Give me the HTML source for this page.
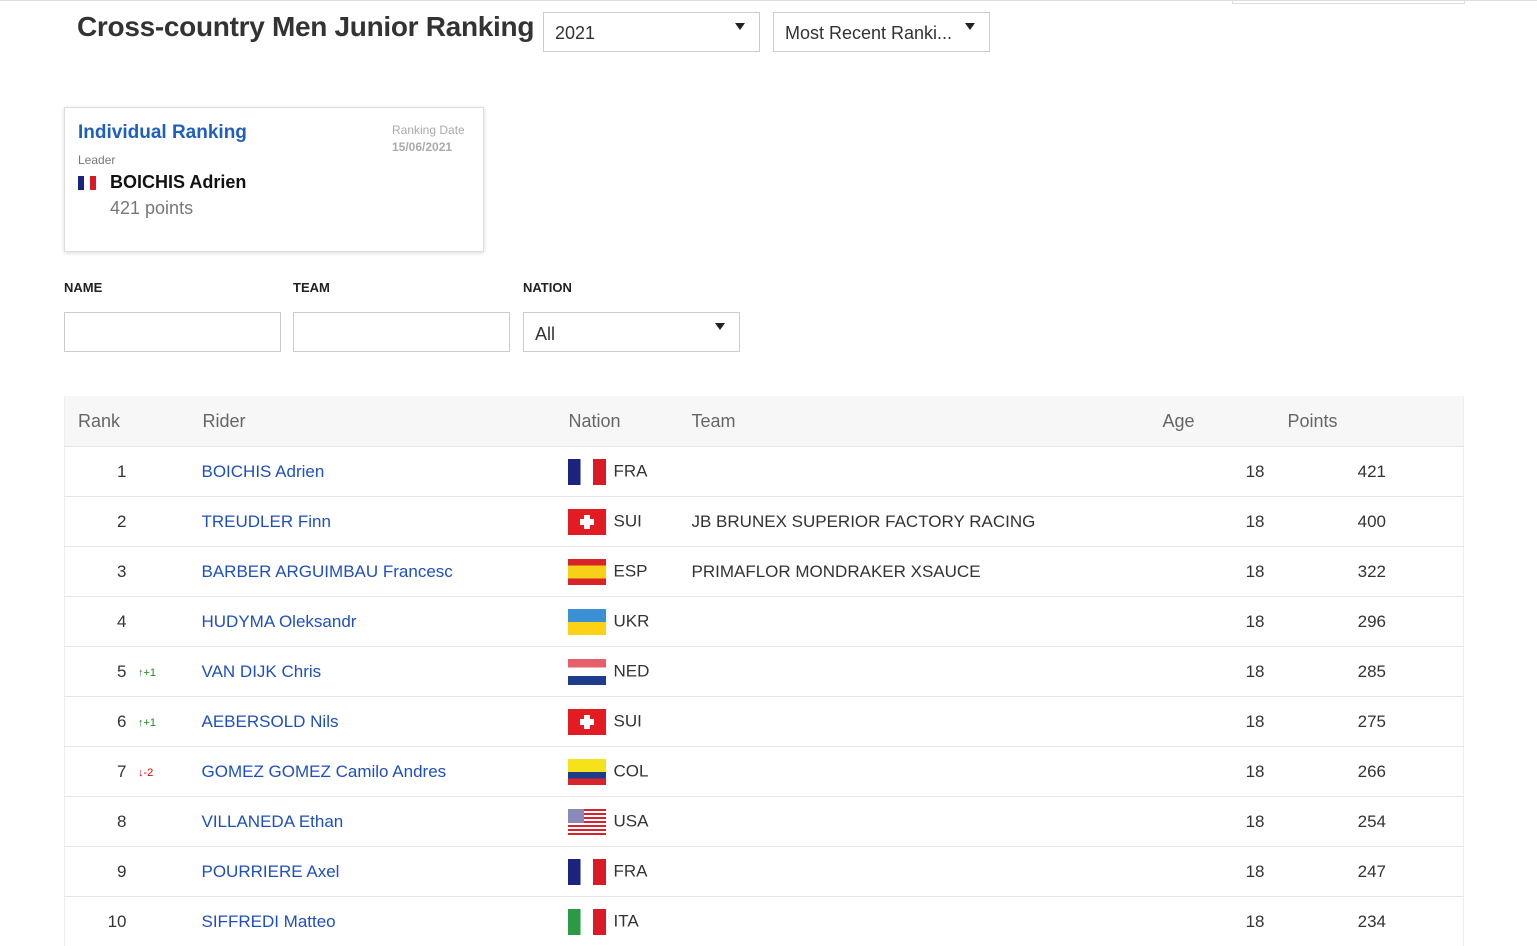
<!DOCTYPE html>
<html><head><meta charset="utf-8"><style>
body{margin:0;width:1537px;height:942px;overflow:hidden;background:#fff;font-family:"Liberation Sans",sans-serif;color:#333;position:relative}
.a{position:absolute}
.sel{position:absolute;border:1px solid #ccc;height:38px;box-sizing:border-box;font-size:18px;color:#333;padding:10px 11px 8px}
.sel:after{content:"";position:absolute;right:14px;top:10px;border:5px solid transparent;border-top:7px solid #222}
.inp{position:absolute;border:1px solid #ccc;height:40px;width:217px;box-sizing:border-box;top:312px}
.lbl{position:absolute;top:280px;font-size:13px;font-weight:bold;color:#222}
table{position:absolute;left:64px;top:396px;width:1400px;border-collapse:collapse;table-layout:fixed;font-size:17px;border-left:1px solid #eee;border-right:1px solid #eee}
td,th{height:50px;padding:2px 0 0;box-sizing:border-box;border-top:1px solid #e6e6e6;font-weight:normal;white-space:nowrap;overflow:visible}
th{background:#f7f7f7;color:#666;text-align:left;border:none;font-size:18px}
.r{text-align:right;padding-right:62px;position:relative}
.n{color:#1f4fbf;padding-left:13px}
.f{display:inline-block;width:38px;height:26px;vertical-align:middle;margin-right:8px;position:relative}
.m{position:absolute;left:73px;top:20px;font-size:11px}
.ag{text-align:right;padding-right:11px}
.pt{text-align:right;padding-right:77px}
</style></head><body>
<div class="a" style="left:0;top:0;width:1537px;border-top:1px solid #ddd"></div>
<div class="a" style="left:1232px;top:0;width:231px;height:3px;border:1px solid #ddd;border-top:none"></div>
<div class="a" style="left:77px;top:11px;font-size:28px;font-weight:bold;color:#333;letter-spacing:-0.3px">Cross-country Men Junior Ranking</div>
<div class="sel" style="left:543px;top:12px;width:217px;height:40px">2021</div>
<div class="sel" style="left:773px;top:12px;width:217px;height:40px">Most Recent Ranki...</div>
<div class="a" style="left:64px;top:107px;width:420px;height:145px;box-sizing:border-box;border:1px solid #ddd;box-shadow:0 1px 4px rgba(0,0,0,.15)">
<div class="a" style="left:13px;top:14px;font-size:19px;font-weight:bold;color:#1f5fbf">Individual Ranking</div>
<div class="a" style="left:327px;top:14px;font-size:12px;color:#aaa;line-height:17px">Ranking Date<br><b>15/06/2021</b></div>
<div class="a" style="left:13px;top:45px;font-size:12px;color:#777">Leader</div>
<div class="a" style="left:13px;top:68px;width:18px;height:14px;background:linear-gradient(90deg,#1a237e 33%,#fff 33% 66%,#d81b26 66%)"></div>
<div class="a" style="left:45px;top:64px;font-size:18px;font-weight:bold;color:#111">BOICHIS Adrien</div>
<div class="a" style="left:45px;top:90px;font-size:18px;color:#777">421 points</div>
</div>
<div class="lbl" style="left:64px">NAME</div><div class="lbl" style="left:293px">TEAM</div><div class="lbl" style="left:523px">NATION</div>
<div class="inp" style="left:64px"></div><div class="inp" style="left:293px"></div>
<div class="sel" style="left:523px;top:312px;width:217px;height:40px;padding-top:11px">All</div>
<table>
<colgroup><col style="width:124px"><col style="width:379px"><col style="width:124px"><col style="width:459px"><col style="width:125px"><col></colgroup>
<tr><th style="padding-left:13px">Rank</th><th style="padding-left:14px">Rider</th><th style="padding-left:1px">Nation</th><th>Team</th><th style="padding-left:12px">Age</th><th style="padding-left:12px">Points</th></tr>
<tr><td class="r">1</td><td class="n">BOICHIS Adrien</td><td><span class="f" style="background:linear-gradient(90deg,#1a237e 33%,#fff 33% 66%,#d81b26 66%)"></span>FRA</td><td></td><td class="ag">18</td><td class="pt">421</td></tr>
<tr><td class="r">2</td><td class="n">TREUDLER Finn</td><td><span class="f" style="background:#e31b23"><span class="a" style="left:16px;top:6px;width:6px;height:14px;background:#fff"></span><span class="a" style="left:12px;top:10px;width:14px;height:6px;background:#fff"></span></span>SUI</td><td>JB BRUNEX SUPERIOR FACTORY RACING</td><td class="ag">18</td><td class="pt">400</td></tr>
<tr><td class="r">3</td><td class="n">BARBER ARGUIMBAU Francesc</td><td><span class="f" style="background:linear-gradient(#d8232a 25%,#f7d117 25% 75%,#d8232a 75%)"></span>ESP</td><td>PRIMAFLOR MONDRAKER XSAUCE</td><td class="ag">18</td><td class="pt">322</td></tr>
<tr><td class="r">4</td><td class="n">HUDYMA Oleksandr</td><td><span class="f" style="background:linear-gradient(#3b8fd4 50%,#fcd116 50%)"></span>UKR</td><td></td><td class="ag">18</td><td class="pt">296</td></tr>
<tr><td class="r">5<span class="m" style="color:#1a8a1a">↑+1</span></td><td class="n">VAN DIJK Chris</td><td><span class="f" style="background:linear-gradient(#e5606a 33%,#fff 33% 66%,#1e3c8c 66%)"></span>NED</td><td></td><td class="ag">18</td><td class="pt">285</td></tr>
<tr><td class="r">6<span class="m" style="color:#1a8a1a">↑+1</span></td><td class="n">AEBERSOLD Nils</td><td><span class="f" style="background:#e31b23"><span class="a" style="left:16px;top:6px;width:6px;height:14px;background:#fff"></span><span class="a" style="left:12px;top:10px;width:14px;height:6px;background:#fff"></span></span>SUI</td><td></td><td class="ag">18</td><td class="pt">275</td></tr>
<tr><td class="r">7<span class="m" style="color:#e00">↓-2</span></td><td class="n">GOMEZ GOMEZ Camilo Andres</td><td><span class="f" style="background:linear-gradient(#f5e21a 50%,#1e3c8c 50% 75%,#d8232a 75%)"></span>COL</td><td></td><td class="ag">18</td><td class="pt">266</td></tr>
<tr><td class="r">8</td><td class="n">VILLANEDA Ethan</td><td><span class="f" style="background:linear-gradient(#8a8ab8,#8a8ab8) 0 0/16px 14px no-repeat,repeating-linear-gradient(#d8232a 0 2px,#fff 2px 4px)"></span>USA</td><td></td><td class="ag">18</td><td class="pt">254</td></tr>
<tr><td class="r">9</td><td class="n">POURRIERE Axel</td><td><span class="f" style="background:linear-gradient(90deg,#1a237e 33%,#fff 33% 66%,#d81b26 66%)"></span>FRA</td><td></td><td class="ag">18</td><td class="pt">247</td></tr>
<tr><td class="r">10</td><td class="n">SIFFREDI Matteo</td><td><span class="f" style="background:linear-gradient(90deg,#2a9a45 33%,#fff 33% 66%,#d81b26 66%)"></span>ITA</td><td></td><td class="ag">18</td><td class="pt">234</td></tr>
</table>
</body></html>
